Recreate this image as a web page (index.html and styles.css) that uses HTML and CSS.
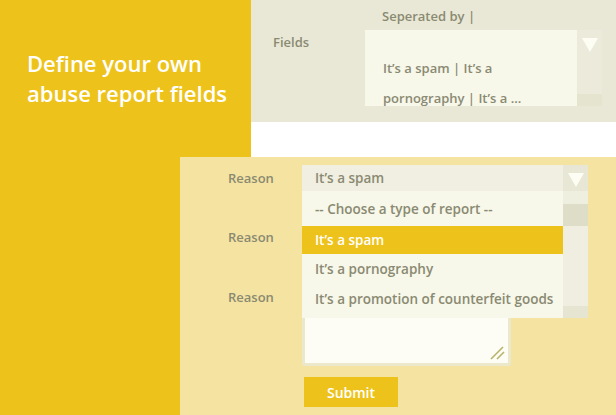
FILE: index.html
```html
<!DOCTYPE html>
<html lang="en">
<head>
  <meta charset="UTF-8">
  <title>Abuse report fields</title>
  <link rel="stylesheet" href="styles.css">
</head>
<body>
  <div class="page">
    <div class="top flex">
      <div class="hero">
        <h1>Define your own<br>abuse report fields</h1>
      </div>
      <div class="top-right flex-1">
        <div class="settings">
          <span class="label fields-label">Fields</span>
          <div class="setting-field">
            <div class="hint">Seperated by |</div>
            <div class="box flex">
              <div class="box-text flex-1">It’s a spam | It’s a pornography | It’s a ...</div>
              <div class="box-bar">
                <span class="arrow"></span>
                <span class="box-bar-end"></span>
              </div>
            </div>
          </div>
        </div>
        <div class="gap"></div>
      </div>
    </div>

    <form class="report">
      <div class="row flex">
        <span class="label">Reason</span>
        <div class="select">
          <div class="select-head flex">
            <span class="flex-1">It’s a spam</span>
            <span class="select-btn"><span class="arrow"></span></span>
          </div>
          <div class="dropdown flex">
            <ul class="options flex-1">
              <li>-- Choose a type of report --</li>
              <li class="active">It’s a spam</li>
              <li>It’s a pornography</li>
              <li>It’s a promotion of counterfeit goods</li>
            </ul>
            <div class="scroll">
              <span class="scroll-top"></span>
              <span class="scroll-thumb"></span>
              <span class="scroll-track"></span>
              <span class="scroll-end"></span>
            </div>
          </div>
        </div>
      </div>
      <div class="row flex">
        <span class="label">Reason</span>
        <div class="input"></div>
      </div>
      <div class="row row-text flex">
        <span class="label">Reason</span>
        <div class="textarea">
          <svg class="grip" width="16" height="14" viewBox="0 0 16 14">
            <path d="M2 13 L14 1 M8 13 L15 6" stroke="#b9b56c" stroke-width="1.6" fill="none"/>
          </svg>
        </div>
      </div>
      <div class="row flex">
        <span class="label"></span>
        <button type="button">Submit</button>
      </div>
    </form>
  </div>
</body>
</html>
```

FILE: styles.css
```css
*{
  margin: 0;
  padding: 0;
  box-sizing: border-box;
}
.flex{display:flex;}
.flex-1{flex:1;}

body{
  background: #edc31b;
  font-family: "Open Sans", "Noto Sans", sans-serif;
  overflow: hidden;
}
.page{
  width: 616px;
  height: 415px;
  background: #edc31b;
}

/* top part */
.top{
  height: 157px;
}
.hero{
  width: 251px;
  padding: 48px 0 0 27px;
}
.hero h1{
  color: #fff;
  font-size: 22px;
  line-height: 30px;
  font-weight: 600;
}
.top-right{
  display: flex;
  flex-direction: column;
}
.settings{
  height: 122px;
  background: #e9e8d6;
  display: flex;
  padding-left: 22px;
}
.gap{
  flex: 1;
  background: #fff;
}
.label{
  width: 74px;
  color: #8a8a72;
  font-size: 13px;
  font-weight: 600;
}
.fields-label{
  width: 92px;
  padding-top: 33px;
}
.setting-field{
  width: 237px;
}
.hint{
  height: 30px;
  padding: 7px 0 0 17px;
  color: #8a8a72;
  font-size: 13px;
  font-weight: 600;
}
.box{
  height: 76px;
  background: #f7f7ea;
  overflow: hidden;
}
.box-text{
  padding: 23px 10px 0 18px;
  color: #8a8a72;
  font-size: 13px;
  font-weight: 600;
  line-height: 30px;
}
.box-bar{
  width: 25px;
  background: #ecebdb;
  display: flex;
  flex-direction: column;
  align-items: center;
}
.box-bar .arrow{
  margin-top: 8px;
}
.box-bar-end{
  margin-top: auto;
  width: 100%;
  height: 12px;
  background: #e5e4cf;
}
.arrow{
  display: block;
  width: 0;
  height: 0;
  border-left: 8px solid transparent;
  border-right: 8px solid transparent;
  border-top: 14px solid #fdfdf4;
}

/* report form */
.report{
  margin-left: 180px;
  height: 258px;
  background: #f5e3a1;
  padding: 8px 0 0 48px;
}
.row{
  align-items: center;
  margin-bottom: 33px;
}
.row .label{
  width: 74px;
}
.select{
  position: relative;
  width: 286px;
}
.select-head{
  height: 26px;
  align-items: center;
  background: #f0efe1;
  color: #8a8a72;
  font-size: 13.5px;
  font-weight: 600;
  padding-left: 13px;
}
.select-btn{
  width: 25px;
  height: 26px;
  background: #e8e7d5;
  display: flex;
  justify-content: center;
  padding-top: 8px;
}
.dropdown{
  position: absolute;
  top: 26px;
  left: 0;
  width: 286px;
  height: 127px;
  background: #f7f7ea;
  z-index: 2;
}
.options{
  list-style: none;
  padding-top: 3px;
}
.options li{
  height: 30px;
  line-height: 30px;
  padding-left: 13px;
  color: #8a8a72;
  font-size: 13.5px;
  font-weight: 600;
  white-space: nowrap;
}
.options li.active{
  height: 28px;
  line-height: 28px;
  margin: 2px 0 1px;
  background: #edc31b;
  color: #fff;
}
.options li.active + li{
  margin-top: -1px;
}
.scroll{
  width: 25px;
  display: flex;
  flex-direction: column;
  background: #efeee0;
}
.scroll-top{height: 13px; background: #efefe0;}
.scroll-thumb{height: 22px; background: #deddc8;}
.scroll-track{flex: 1;}
.scroll-end{height: 12px; background: #e6e5d2;}

.input{
  width: 209px;
  height: 26px;
  background: #fdfdf6;
}
.row-text{
  align-items: flex-start;
  margin-bottom: 11px;
}
.row-text .label{
  padding-top: 5px;
}
.textarea{
  position: relative;
  width: 209px;
  height: 83px;
  background: #fdfdf6;
  border: 3px solid #ebe8cc;
  border-radius: 3px;
}
.grip{
  position: absolute;
  right: 3px;
  bottom: 3px;
}
button{
  width: 94px;
  height: 30px;
  margin-left: 2px;
  border: 0;
  outline: 0;
  background: #edc31b;
  color: #fff;
  font-family: inherit;
  font-size: 14px;
  font-weight: 600;
}
```
